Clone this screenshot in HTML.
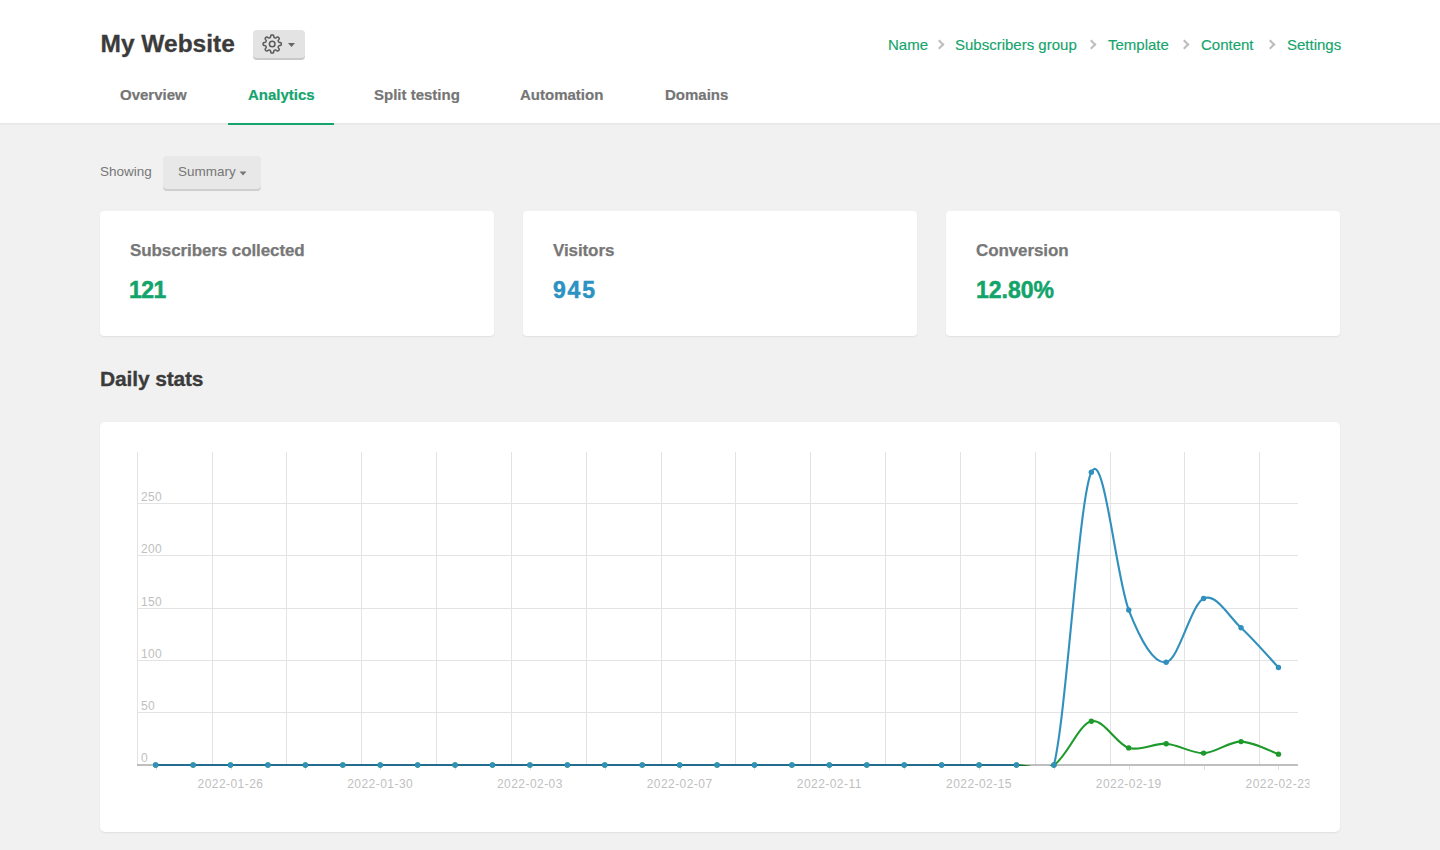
<!DOCTYPE html>
<html><head><meta charset="utf-8">
<style>
*{margin:0;padding:0;box-sizing:border-box}
html,body{width:1440px;height:850px;overflow:hidden;background:#f1f1f1;font-family:"Liberation Sans",sans-serif}
.abs{position:absolute;white-space:nowrap;line-height:1}
#hdr{position:absolute;left:0;top:0;width:1440px;height:125px;background:#fff;border-bottom:2px solid #e8e8e8}
#title{left:100.5px;top:32px;font-size:24.5px;font-weight:bold;color:#3b3b3b;-webkit-text-stroke:0.3px currentColor}
#gear{position:absolute;left:252.7px;top:30px;width:52.2px;height:28px;background:#e3e3e3;border-radius:4px;box-shadow:0 2px 0 #c9c9c9}
.bc{top:36.8px;font-size:15px;color:#14a46c;-webkit-text-stroke:0.15px currentColor}
.chev{position:absolute;top:40.5px;width:7px;height:7px;border-right:2px solid #bdbdbd;border-top:2px solid #bdbdbd;transform:rotate(45deg)}
.tab{top:87px;font-size:15px;font-weight:bold;color:#757575;-webkit-text-stroke:0.2px currentColor}
#tabline{position:absolute;left:228px;top:123px;width:106px;height:2px;background:#14a46c}
#showing{left:100px;top:165.4px;font-size:13.5px;color:#777}
#summ{position:absolute;left:163px;top:155.5px;width:98px;height:33px;background:#e8e8e8;border-radius:4px;box-shadow:0 2px 0 #cfcfcf}
#summtxt{left:178px;top:165.4px;font-size:13.5px;color:#777}
.card{position:absolute;top:211px;width:394px;height:125px;background:#fff;border-radius:4px;box-shadow:0 1px 2px rgba(0,0,0,0.07)}
.ctitle{top:241.5px;font-size:17px;letter-spacing:-0.1px;font-weight:bold;color:#777;-webkit-text-stroke:0.25px currentColor}
.cval{top:278.5px;font-size:23px;font-weight:bold;-webkit-text-stroke:0.5px currentColor}
#daily{left:100px;top:368px;font-size:21px;letter-spacing:-0.15px;font-weight:bold;color:#3b3b3b;-webkit-text-stroke:0.3px currentColor}
#chartcard{position:absolute;left:100px;top:422px;width:1240px;height:410px;background:#fff;border-radius:5px;box-shadow:0 1px 2px rgba(0,0,0,0.07)}
.yl{font-family:"Liberation Sans",sans-serif;font-size:12px;fill:#c0c0c0;letter-spacing:0.3px}
.xl{font-family:"Liberation Sans",sans-serif;font-size:12px;fill:#c0c0c0;letter-spacing:0.45px}
</style></head><body>
<div id="hdr"></div>
<div class="abs" id="title">My Website</div>
<div id="gear">
<svg width="52" height="30" style="position:absolute;left:0;top:0">
<g transform="translate(19.2,14)" fill="none" stroke="#5a5a5a" stroke-width="1.5">
<circle r="2.8"/>
<path id="gearpath" d="M0.00,-9.10 L0.24,-9.09 L0.48,-9.07 L0.71,-9.03 L0.94,-8.96 L1.16,-8.81 L1.35,-8.52 L1.49,-8.04 L1.58,-7.46 L1.67,-6.97 L1.79,-6.68 L1.93,-6.51 L2.08,-6.41 L2.24,-6.33 L2.40,-6.26 L2.56,-6.19 L2.73,-6.12 L2.89,-6.06 L3.06,-6.00 L3.24,-5.97 L3.46,-5.99 L3.75,-6.12 L4.15,-6.39 L4.63,-6.74 L5.07,-6.98 L5.41,-7.05 L5.67,-7.00 L5.89,-6.89 L6.08,-6.75 L6.26,-6.60 L6.43,-6.43 L6.60,-6.26 L6.75,-6.08 L6.89,-5.89 L7.00,-5.67 L7.05,-5.41 L6.98,-5.07 L6.74,-4.63 L6.39,-4.15 L6.12,-3.75 L5.99,-3.46 L5.97,-3.24 L6.00,-3.06 L6.06,-2.89 L6.12,-2.73 L6.19,-2.56 L6.26,-2.40 L6.33,-2.24 L6.41,-2.08 L6.51,-1.93 L6.68,-1.79 L6.97,-1.67 L7.46,-1.58 L8.04,-1.49 L8.52,-1.35 L8.81,-1.16 L8.96,-0.94 L9.03,-0.71 L9.07,-0.48 L9.09,-0.24 L9.10,-0.00 L9.09,0.24 L9.07,0.48 L9.03,0.71 L8.96,0.94 L8.81,1.16 L8.52,1.35 L8.04,1.49 L7.46,1.58 L6.97,1.67 L6.68,1.79 L6.51,1.93 L6.41,2.08 L6.33,2.24 L6.26,2.40 L6.19,2.56 L6.12,2.73 L6.06,2.89 L6.00,3.06 L5.97,3.24 L5.99,3.46 L6.12,3.75 L6.39,4.15 L6.74,4.63 L6.98,5.07 L7.05,5.41 L7.00,5.67 L6.89,5.89 L6.75,6.08 L6.60,6.26 L6.43,6.43 L6.26,6.60 L6.08,6.75 L5.89,6.89 L5.67,7.00 L5.41,7.05 L5.07,6.98 L4.63,6.74 L4.15,6.39 L3.75,6.12 L3.46,5.99 L3.24,5.97 L3.06,6.00 L2.89,6.06 L2.73,6.12 L2.56,6.19 L2.40,6.26 L2.24,6.33 L2.08,6.41 L1.93,6.51 L1.79,6.68 L1.67,6.97 L1.58,7.46 L1.49,8.04 L1.35,8.52 L1.16,8.81 L0.94,8.96 L0.71,9.03 L0.48,9.07 L0.24,9.09 L0.00,9.10 L-0.24,9.09 L-0.48,9.07 L-0.71,9.03 L-0.94,8.96 L-1.16,8.81 L-1.35,8.52 L-1.49,8.04 L-1.58,7.46 L-1.67,6.97 L-1.79,6.68 L-1.93,6.51 L-2.08,6.41 L-2.24,6.33 L-2.40,6.26 L-2.56,6.19 L-2.73,6.12 L-2.89,6.06 L-3.06,6.00 L-3.24,5.97 L-3.46,5.99 L-3.75,6.12 L-4.15,6.39 L-4.63,6.74 L-5.07,6.98 L-5.41,7.05 L-5.67,7.00 L-5.89,6.89 L-6.08,6.75 L-6.26,6.60 L-6.43,6.43 L-6.60,6.26 L-6.75,6.08 L-6.89,5.89 L-7.00,5.67 L-7.05,5.41 L-6.98,5.07 L-6.74,4.63 L-6.39,4.15 L-6.12,3.75 L-5.99,3.46 L-5.97,3.24 L-6.00,3.06 L-6.06,2.89 L-6.12,2.73 L-6.19,2.56 L-6.26,2.40 L-6.33,2.24 L-6.41,2.08 L-6.51,1.93 L-6.68,1.79 L-6.97,1.67 L-7.46,1.58 L-8.04,1.49 L-8.52,1.35 L-8.81,1.16 L-8.96,0.94 L-9.03,0.71 L-9.07,0.48 L-9.09,0.24 L-9.10,0.00 L-9.09,-0.24 L-9.07,-0.48 L-9.03,-0.71 L-8.96,-0.94 L-8.81,-1.16 L-8.52,-1.35 L-8.04,-1.49 L-7.46,-1.58 L-6.97,-1.67 L-6.68,-1.79 L-6.51,-1.93 L-6.41,-2.08 L-6.33,-2.24 L-6.26,-2.40 L-6.19,-2.56 L-6.12,-2.73 L-6.06,-2.89 L-6.00,-3.06 L-5.97,-3.24 L-5.99,-3.46 L-6.12,-3.75 L-6.39,-4.15 L-6.74,-4.63 L-6.98,-5.07 L-7.05,-5.41 L-7.00,-5.67 L-6.89,-5.89 L-6.75,-6.08 L-6.60,-6.26 L-6.43,-6.43 L-6.26,-6.60 L-6.08,-6.75 L-5.89,-6.89 L-5.67,-7.00 L-5.41,-7.05 L-5.07,-6.98 L-4.63,-6.74 L-4.15,-6.39 L-3.75,-6.12 L-3.46,-5.99 L-3.24,-5.97 L-3.06,-6.00 L-2.89,-6.06 L-2.73,-6.12 L-2.56,-6.19 L-2.40,-6.26 L-2.24,-6.33 L-2.08,-6.41 L-1.93,-6.51 L-1.79,-6.68 L-1.67,-6.97 L-1.58,-7.46 L-1.49,-8.04 L-1.35,-8.52 L-1.16,-8.81 L-0.94,-8.96 L-0.71,-9.03 L-0.48,-9.07 L-0.24,-9.09Z"/>
</g>
<path d="M35,13 L42,13 L38.5,17 Z" fill="#666"/>
</svg>
</div>
<div class="abs bc" style="left:888px">Name</div>
<div class="chev" style="left:936px"></div>
<div class="abs bc" style="left:955px">Subscribers group</div>
<div class="chev" style="left:1088px"></div>
<div class="abs bc" style="left:1108px">Template</div>
<div class="chev" style="left:1181px"></div>
<div class="abs bc" style="left:1201px">Content</div>
<div class="chev" style="left:1267px"></div>
<div class="abs bc" style="left:1287px">Settings</div>
<div class="abs tab" style="left:120px">Overview</div>
<div class="abs tab" style="left:248px;color:#14a46c">Analytics</div>
<div class="abs tab" style="left:374px">Split testing</div>
<div class="abs tab" style="left:520px">Automation</div>
<div class="abs tab" style="left:665px">Domains</div>
<div id="tabline"></div>
<div class="abs" id="showing">Showing</div>
<div id="summ"></div>
<div class="abs" id="summtxt">Summary</div>
<svg width="10" height="6" style="position:absolute;left:238.5px;top:170.7px"><path d="M0.5,0.5 L7.5,0.5 L4,4.5 Z" fill="#777"/></svg>
<div class="card" style="left:100px"></div>
<div class="card" style="left:523px"></div>
<div class="card" style="left:946px"></div>
<div class="abs ctitle" style="left:130px">Subscribers collected</div>
<div class="abs cval" style="left:129px;color:#12a46b;letter-spacing:-0.6px">121</div>
<div class="abs ctitle" style="left:553px">Visitors</div>
<div class="abs cval" style="left:553px;color:#2b92c1;letter-spacing:1.8px">945</div>
<div class="abs ctitle" style="left:976px">Conversion</div>
<div class="abs cval" style="left:976px;color:#12a46b">12.80%</div>
<div class="abs" id="daily">Daily stats</div>
<div id="chartcard"></div>
<svg width="1440" height="850" style="position:absolute;left:0;top:0">
<defs><clipPath id="pc"><rect x="137.0" y="441.3" width="1161.0" height="324.7"/></clipPath>
<clipPath id="lc"><rect x="0" y="0" width="1309.5" height="850"/></clipPath></defs>
<path d="M137.5,452 V764.6 M212.5,452 V764.6 M286.5,452 V764.6 M361.5,452 V764.6 M436.5,452 V764.6 M511.5,452 V764.6 M586.5,452 V764.6 M661.5,452 V764.6 M735.5,452 V764.6 M810.5,452 V764.6 M885.5,452 V764.6 M960.5,452 V764.6 M1035.5,452 V764.6 M1110.5,452 V764.6 M1184.5,452 V764.6 M1259.5,452 V764.6 M137.0,712.5 H1298.0 M137.0,660.5 H1298.0 M137.0,608.5 H1298.0 M137.0,555.5 H1298.0 M137.0,503.5 H1298.0" stroke="#e3e3e3" stroke-width="1" fill="none"/>
<path d="M156.5,766 V770 M231.5,766 V770 M305.5,766 V770 M380.5,766 V770 M455.5,766 V770 M530.5,766 V770 M605.5,766 V770 M680.5,766 V770 M754.5,766 V770 M829.5,766 V770 M904.5,766 V770 M979.5,766 V770 M1054.5,766 V770 M1129.5,766 V770 M1204.5,766 V770 M1278.5,766 V770" stroke="#e0e0e0" stroke-width="1" fill="none"/>
<text x="141" y="761.8" class="yl">0</text>
<text x="141" y="710.0" class="yl">50</text>
<text x="141" y="657.9" class="yl">100</text>
<text x="141" y="605.9" class="yl">150</text>
<text x="141" y="552.9" class="yl">200</text>
<text x="141" y="500.8" class="yl">250</text>
<g clip-path="url(#lc)">
<text x="230.5" y="788.2" class="xl" text-anchor="middle">2022-01-26</text>
<text x="380.2" y="788.2" class="xl" text-anchor="middle">2022-01-30</text>
<text x="529.9" y="788.2" class="xl" text-anchor="middle">2022-02-03</text>
<text x="679.6" y="788.2" class="xl" text-anchor="middle">2022-02-07</text>
<text x="829.3" y="788.2" class="xl" text-anchor="middle">2022-02-11</text>
<text x="979.0" y="788.2" class="xl" text-anchor="middle">2022-02-15</text>
<text x="1128.8" y="788.2" class="xl" text-anchor="middle">2022-02-19</text>
<text x="1278.5" y="788.2" class="xl" text-anchor="middle">2022-02-23</text>
</g>
<g clip-path="url(#pc)">
<path d="M155.65,765.00 C161.89,765.00 180.60,765.00 193.08,765.00 C205.55,765.00 218.03,765.00 230.50,765.00 C242.98,765.00 255.46,765.00 267.93,765.00 C280.41,765.00 292.88,765.00 305.36,765.00 C317.83,765.00 330.31,765.00 342.78,765.00 C355.26,765.00 367.74,765.00 380.21,765.00 C392.69,765.00 405.16,765.00 417.64,765.00 C430.11,765.00 442.59,765.00 455.07,765.00 C467.54,765.00 480.02,765.00 492.49,765.00 C504.97,765.00 517.44,765.00 529.92,765.00 C542.40,765.00 554.87,765.00 567.35,765.00 C579.82,765.00 592.30,765.00 604.77,765.00 C617.25,765.00 629.73,765.00 642.20,765.00 C654.68,765.00 667.15,765.00 679.63,765.00 C692.10,765.00 704.58,765.00 717.05,765.00 C729.53,765.00 742.01,765.00 754.48,765.00 C766.96,765.00 779.43,765.00 791.91,765.00 C804.38,765.00 816.86,765.00 829.34,765.00 C841.81,765.00 854.29,765.00 866.76,765.00 C879.24,765.00 891.71,765.00 904.19,765.00 C916.67,765.00 929.14,765.00 941.62,765.00 C954.09,765.00 966.57,765.00 979.04,765.00 C991.52,765.00 1004.00,765.00 1016.47,765.00 C1028.95,765.00 1041.42,772.29 1053.90,765.00 C1066.37,757.71 1078.85,724.11 1091.33,721.26 C1103.80,718.41 1116.28,744.15 1128.75,747.89 C1141.23,751.63 1153.70,742.84 1166.18,743.71 C1178.65,744.58 1191.13,753.46 1203.61,753.11 C1216.08,752.76 1228.56,741.45 1241.03,741.62 C1253.51,741.80 1272.22,752.07 1278.46,754.16" stroke="#1e9a2c" stroke-width="2.1" fill="none"/>
<path d="M155.65,765.00 C161.89,765.00 180.60,765.00 193.08,765.00 C205.55,765.00 218.03,765.00 230.50,765.00 C242.98,765.00 255.46,765.00 267.93,765.00 C280.41,765.00 292.88,765.00 305.36,765.00 C317.83,765.00 330.31,765.00 342.78,765.00 C355.26,765.00 367.74,765.00 380.21,765.00 C392.69,765.00 405.16,765.00 417.64,765.00 C430.11,765.00 442.59,765.00 455.07,765.00 C467.54,765.00 480.02,765.00 492.49,765.00 C504.97,765.00 517.44,765.00 529.92,765.00 C542.40,765.00 554.87,765.00 567.35,765.00 C579.82,765.00 592.30,765.00 604.77,765.00 C617.25,765.00 629.73,765.00 642.20,765.00 C654.68,765.00 667.15,765.00 679.63,765.00 C692.10,765.00 704.58,765.00 717.05,765.00 C729.53,765.00 742.01,765.00 754.48,765.00 C766.96,765.00 779.43,765.00 791.91,765.00 C804.38,765.00 816.86,765.00 829.34,765.00 C841.81,765.00 854.29,765.00 866.76,765.00 C879.24,765.00 891.71,765.00 904.19,765.00 C916.67,765.00 929.14,765.00 941.62,765.00 C954.09,765.00 966.57,765.00 979.04,765.00 C991.52,765.00 1004.00,765.00 1016.47,765.00 C1028.95,765.00 1041.42,813.81 1053.90,765.00 C1066.37,716.19 1078.85,498.00 1091.33,472.17 C1103.80,446.34 1116.28,578.35 1128.75,610.03 C1141.23,641.71 1153.70,664.16 1166.18,662.25 C1178.65,660.33 1191.13,604.28 1203.61,598.54 C1216.08,592.80 1228.56,616.30 1241.03,627.78 C1253.51,639.27 1272.22,660.86 1278.46,667.47" stroke="#3190bd" stroke-width="2.1" fill="none"/>
</g>
<path d="M137.0,765 H1298.0" stroke="#000" stroke-opacity="0.25" stroke-width="2"/>
<circle cx="155.65" cy="765.00" r="2.7" fill="#1e9a2c"/>
<circle cx="193.08" cy="765.00" r="2.7" fill="#1e9a2c"/>
<circle cx="230.50" cy="765.00" r="2.7" fill="#1e9a2c"/>
<circle cx="267.93" cy="765.00" r="2.7" fill="#1e9a2c"/>
<circle cx="305.36" cy="765.00" r="2.7" fill="#1e9a2c"/>
<circle cx="342.78" cy="765.00" r="2.7" fill="#1e9a2c"/>
<circle cx="380.21" cy="765.00" r="2.7" fill="#1e9a2c"/>
<circle cx="417.64" cy="765.00" r="2.7" fill="#1e9a2c"/>
<circle cx="455.07" cy="765.00" r="2.7" fill="#1e9a2c"/>
<circle cx="492.49" cy="765.00" r="2.7" fill="#1e9a2c"/>
<circle cx="529.92" cy="765.00" r="2.7" fill="#1e9a2c"/>
<circle cx="567.35" cy="765.00" r="2.7" fill="#1e9a2c"/>
<circle cx="604.77" cy="765.00" r="2.7" fill="#1e9a2c"/>
<circle cx="642.20" cy="765.00" r="2.7" fill="#1e9a2c"/>
<circle cx="679.63" cy="765.00" r="2.7" fill="#1e9a2c"/>
<circle cx="717.05" cy="765.00" r="2.7" fill="#1e9a2c"/>
<circle cx="754.48" cy="765.00" r="2.7" fill="#1e9a2c"/>
<circle cx="791.91" cy="765.00" r="2.7" fill="#1e9a2c"/>
<circle cx="829.34" cy="765.00" r="2.7" fill="#1e9a2c"/>
<circle cx="866.76" cy="765.00" r="2.7" fill="#1e9a2c"/>
<circle cx="904.19" cy="765.00" r="2.7" fill="#1e9a2c"/>
<circle cx="941.62" cy="765.00" r="2.7" fill="#1e9a2c"/>
<circle cx="979.04" cy="765.00" r="2.7" fill="#1e9a2c"/>
<circle cx="1016.47" cy="765.00" r="2.7" fill="#1e9a2c"/>
<circle cx="1053.90" cy="765.00" r="2.7" fill="#1e9a2c"/>
<circle cx="1091.33" cy="721.26" r="2.7" fill="#1e9a2c"/>
<circle cx="1128.75" cy="747.89" r="2.7" fill="#1e9a2c"/>
<circle cx="1166.18" cy="743.71" r="2.7" fill="#1e9a2c"/>
<circle cx="1203.61" cy="753.11" r="2.7" fill="#1e9a2c"/>
<circle cx="1241.03" cy="741.62" r="2.7" fill="#1e9a2c"/>
<circle cx="1278.46" cy="754.16" r="2.7" fill="#1e9a2c"/>
<circle cx="155.65" cy="765.00" r="2.7" fill="#3190bd"/>
<circle cx="193.08" cy="765.00" r="2.7" fill="#3190bd"/>
<circle cx="230.50" cy="765.00" r="2.7" fill="#3190bd"/>
<circle cx="267.93" cy="765.00" r="2.7" fill="#3190bd"/>
<circle cx="305.36" cy="765.00" r="2.7" fill="#3190bd"/>
<circle cx="342.78" cy="765.00" r="2.7" fill="#3190bd"/>
<circle cx="380.21" cy="765.00" r="2.7" fill="#3190bd"/>
<circle cx="417.64" cy="765.00" r="2.7" fill="#3190bd"/>
<circle cx="455.07" cy="765.00" r="2.7" fill="#3190bd"/>
<circle cx="492.49" cy="765.00" r="2.7" fill="#3190bd"/>
<circle cx="529.92" cy="765.00" r="2.7" fill="#3190bd"/>
<circle cx="567.35" cy="765.00" r="2.7" fill="#3190bd"/>
<circle cx="604.77" cy="765.00" r="2.7" fill="#3190bd"/>
<circle cx="642.20" cy="765.00" r="2.7" fill="#3190bd"/>
<circle cx="679.63" cy="765.00" r="2.7" fill="#3190bd"/>
<circle cx="717.05" cy="765.00" r="2.7" fill="#3190bd"/>
<circle cx="754.48" cy="765.00" r="2.7" fill="#3190bd"/>
<circle cx="791.91" cy="765.00" r="2.7" fill="#3190bd"/>
<circle cx="829.34" cy="765.00" r="2.7" fill="#3190bd"/>
<circle cx="866.76" cy="765.00" r="2.7" fill="#3190bd"/>
<circle cx="904.19" cy="765.00" r="2.7" fill="#3190bd"/>
<circle cx="941.62" cy="765.00" r="2.7" fill="#3190bd"/>
<circle cx="979.04" cy="765.00" r="2.7" fill="#3190bd"/>
<circle cx="1016.47" cy="765.00" r="2.7" fill="#3190bd"/>
<circle cx="1053.90" cy="765.00" r="2.7" fill="#3190bd"/>
<circle cx="1091.33" cy="472.17" r="2.7" fill="#3190bd"/>
<circle cx="1128.75" cy="610.03" r="2.7" fill="#3190bd"/>
<circle cx="1166.18" cy="662.25" r="2.7" fill="#3190bd"/>
<circle cx="1203.61" cy="598.54" r="2.7" fill="#3190bd"/>
<circle cx="1241.03" cy="627.78" r="2.7" fill="#3190bd"/>
<circle cx="1278.46" cy="667.47" r="2.7" fill="#3190bd"/>
</svg>
</body></html>
